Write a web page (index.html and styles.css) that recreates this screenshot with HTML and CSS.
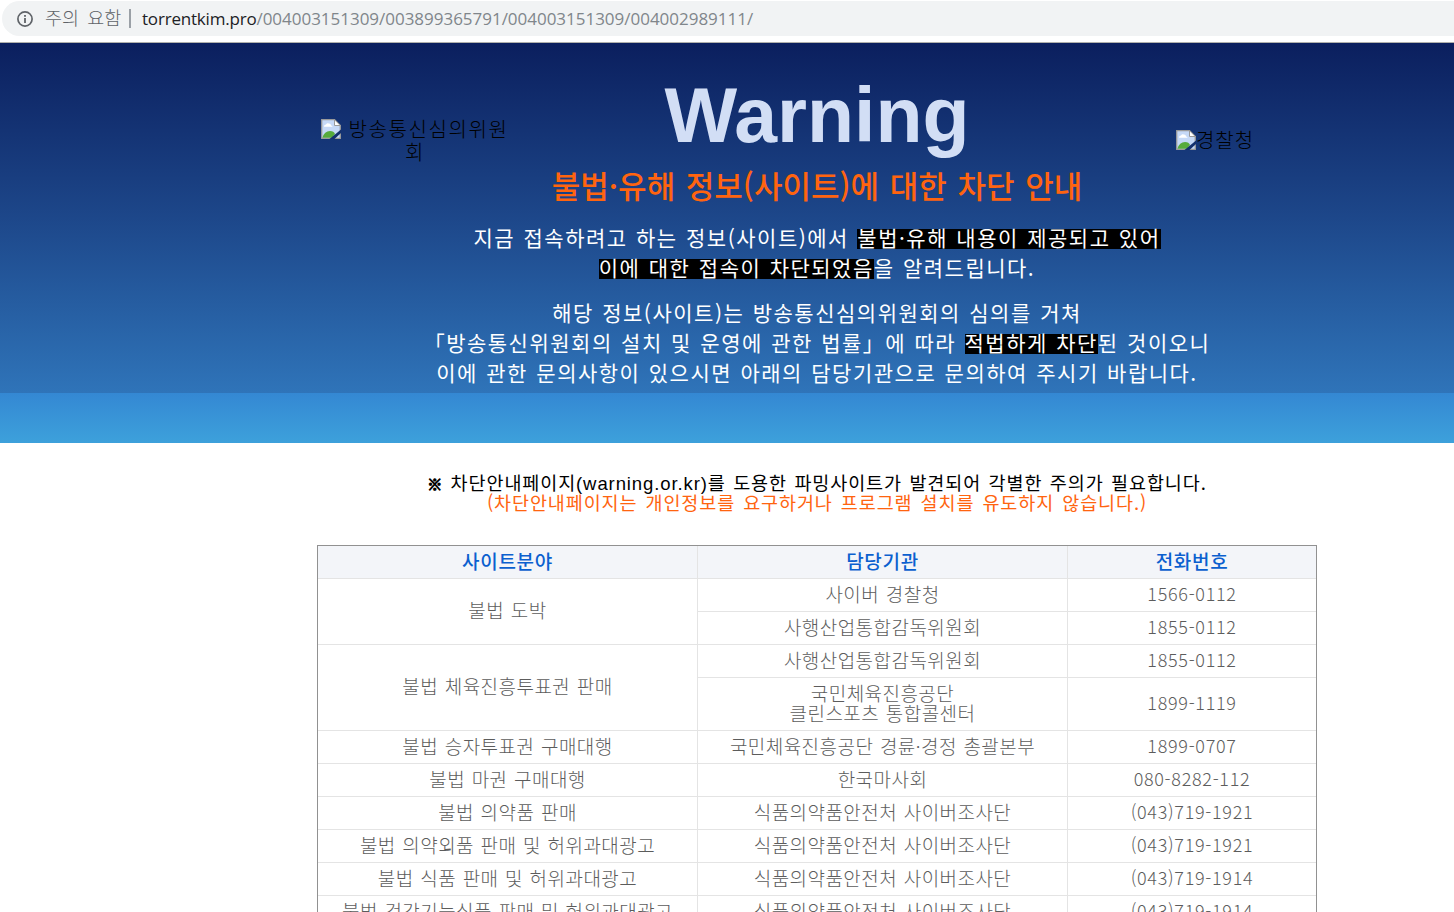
FILE: index.html
```html
<!DOCTYPE html>
<html lang="ko">
<head>
    <meta charset="UTF-8">
    <title>불법·유해 정보(사이트)에 대한 차단 안내</title>
    <link rel="stylesheet" href="styles.css">
</head>
<body>
    <div class="browser-bar">
        <div class="address">
            <svg class="info-icon" viewBox="0 0 16 16" width="16" height="16">
                <circle cx="8" cy="8" r="7.1" fill="none" stroke="#5f6368" stroke-width="1.7"/>
                <rect x="7.1" y="7" width="1.8" height="5" fill="#5f6368"/>
                <rect x="7.1" y="4" width="1.8" height="1.8" fill="#5f6368"/>
            </svg>
            <span class="notice">주의 요함</span>
            <span class="divider"></span>
            <span class="url"><b class="host">torrentkim.pro</b>/004003151309/003899365791/004003151309/004002989111/</span>
        </div>
    </div>

    <header class="top">
        <div class="top-inner">
            <div class="logo logo-left">
                <svg class="broken" viewBox="0 0 20 20" width="20" height="20">
                    <path d="M.7 .7H13.5L19.3 6.5V19.3H.7Z" fill="#c6d9f7" stroke="#9a9a9a" stroke-width="1.3"/>
                    <path d="M3 7.5q0-2 2-2q1-2 3-1q2 0 2 2q1.500 0 1.500 1.200H3Z" fill="#fff"/>
                    <path d="M1.400 18.700q2-6.700 7.600-6.700q4 0 5 3l-3 3.700Z" fill="#57ab3c"/>
                    <path d="M13.500 .7V6.500H19.300Z" fill="#fff" stroke="#9a9a9a"/>
                    <path d="M8.500 20L20 10.500V14L13.500 20Z" fill="#14306d"/>
                </svg>
                방송통신심의위원회
            </div>
            <div class="message">
                <h1>Warning</h1>
                <h2>불법·유해 정보(사이트)에 대한 차단 안내</h2>
                <p>지금 접속하려고 하는 정보(사이트)에서 <mark>불법·유해 내용이 제공되고 있어</mark><br>
                <mark>이에 대한 접속이 차단되었음</mark>을 알려드립니다.</p>
                <p>해당 정보(사이트)는 방송통신심의위원회의 심의를 거쳐<br>
                「방송통신위원회의 설치 및 운영에 관한 법률」에 따라 <mark>적법하게 차단</mark>된 것이오니<br>
                이에 관한 문의사항이 있으시면 아래의 담당기관으로 문의하여 주시기 바랍니다.</p>
            </div>
            <div class="logo logo-right">
                <svg class="broken" viewBox="0 0 20 20" width="20" height="20">
                    <path d="M.7 .7H13.5L19.3 6.5V19.3H.7Z" fill="#c6d9f7" stroke="#9a9a9a" stroke-width="1.3"/>
                    <path d="M3 7.5q0-2 2-2q1-2 3-1q2 0 2 2q1.500 0 1.500 1.200H3Z" fill="#fff"/>
                    <path d="M1.400 18.700q2-6.700 7.600-6.700q4 0 5 3l-3 3.700Z" fill="#57ab3c"/>
                    <path d="M13.500 .7V6.500H19.300Z" fill="#fff" stroke="#9a9a9a"/>
                    <path d="M8.500 20L20 10.500V14L13.500 20Z" fill="#14306d"/>
                </svg>경찰청
            </div>
        </div>
    </header>
    <div class="strip"></div>

    <main>
        <div class="caution">
            <p class="caution-main"><b class="ref-mark">※</b> 차단안내페이지<span class="latin">(warning.or.kr)</span>를 도용한 파밍사이트가 발견되어 각별한 주의가 필요합니다.</p>
            <p class="caution-sub">(차단안내페이지는 개인정보를 요구하거나 프로그램 설치를 유도하지 않습니다.)</p>
        </div>
        <table>
            <colgroup>
                <col class="col-site">
                <col class="col-org">
                <col class="col-tel">
            </colgroup>
            <tr><th>사이트분야</th><th>담당기관</th><th>전화번호</th></tr>
            <tr><td class="group" rowspan="2">불법 도박</td><td>사이버 경찰청</td><td class="tel">1566-0112</td></tr>
            <tr><td>사행산업통합감독위원회</td><td class="tel">1855-0112</td></tr>
            <tr><td class="group" rowspan="2">불법 체육진흥투표권 판매</td><td>사행산업통합감독위원회</td><td class="tel">1855-0112</td></tr>
            <tr><td>국민체육진흥공단<br>클린스포츠 통합콜센터</td><td class="tel">1899-1119</td></tr>
            <tr><td>불법 승자투표권 구매대행</td><td>국민체육진흥공단 경륜·경정 총괄본부</td><td class="tel">1899-0707</td></tr>
            <tr><td>불법 마권 구매대행</td><td>한국마사회</td><td class="tel">080-8282-112</td></tr>
            <tr><td>불법 의약품 판매</td><td>식품의약품안전처 사이버조사단</td><td class="tel">(043)719-1921</td></tr>
            <tr><td>불법 의약외품 판매 및 허위과대광고</td><td>식품의약품안전처 사이버조사단</td><td class="tel">(043)719-1921</td></tr>
            <tr><td>불법 식품 판매 및 허위과대광고</td><td>식품의약품안전처 사이버조사단</td><td class="tel">(043)719-1914</td></tr>
            <tr><td>불법 건강기능식품 판매 및 허위과대광고</td><td>식품의약품안전처 사이버조사단</td><td class="tel">(043)719-1914</td></tr>
        </table>
    </main>
</body>
</html>
```
FILE: styles.css
```css
* {
    box-sizing: border-box;
}

body {
    margin: 0;
    height: 912px;
    overflow: hidden;
    background-color: #fff;
    font-family: "Noto Sans CJK KR", sans-serif;
}

h1, h2, p {
    margin: 0;
}

/* 주소창 */
.browser-bar {
    height: 43px;
    padding: 1px 0 0 2px;
    border-bottom: 1px solid #b0b0ac;
    overflow: hidden;
}

.address {
    display: flex;
    align-items: center;
    height: 35px;
    padding-left: 15px;
    border-radius: 18px 0 0 18px;
    background-color: #f1f3f4;
    color: #80868b;
    white-space: nowrap;
}

.notice {
    margin-left: 12px;
    width: 77px;
    font-size: 18.500px;
    font-weight: 300;
    line-height: 33px;
    padding-bottom: 2px;
    color: #5f6368;
    word-spacing: 3px;
}

.divider {
    width: 2px;
    height: 19px;
    margin: 0 11px 0 7px;
    background-color: #9aa0a6;
}

.url {
    font-family: "Open Sans", sans-serif;
    font-size: 17px;
    line-height: 35px;
    letter-spacing: -0.02px;
}

.host {
    font-weight: normal;
    letter-spacing: -0.2px;
    color: #202124;
}

/* 상단 경고 영역 */
.top {
    height: 350px;
    padding-left: 317px;
    background: linear-gradient(#0b1f5e, #1d478a 50%, #2f74b9);
}

.top-inner {
    display: flex;
    justify-content: space-between;
    width: 1000px;
}

.logo {
    width: 200px;
    flex: none;
    font-size: 20px;
    font-weight: 300;
    line-height: 22px;
    text-align: center;
    color: #000;
}

.logo-left {
    padding: 74px 4px 0 0;
    line-height: 23px;
    word-break: break-all;
    letter-spacing: 1.6px;
}

.logo-right {
    padding: 86px 4px 0 0;
    letter-spacing: 1px;
}

.broken {
    vertical-align: -2px;
}

.message {
    flex: none;
    width: 840px;
    margin: 0 -120px;
    text-align: center;
    color: #fff;
    font-size: 21px;
    line-height: 30px;
    letter-spacing: 1.5px;
    word-spacing: 1px;
    white-space: nowrap;
}

.message h1 {
    padding-top: 30px;
    font-family: "Liberation Sans", sans-serif;
    font-size: 77px;
    line-height: 84px;
    letter-spacing: 0;
    color: #d2def5;
}

.message h2 {
    font-size: 31px;
    font-weight: 500;
    line-height: 40px;
    letter-spacing: 0;
    word-spacing: 2px;
    color: #ff640f;
    padding-top: 8px;
    height: 65px;
}

.message p {
    margin-bottom: 15px;
}

/* 글자보다 살짝 아래로 내려온 검은 배경 */
mark {
    display: inline-block;
    height: 20px;
    line-height: 16px;
    background-color: #000;
    color: #fff;
}

.strip {
    height: 50px;
    background: linear-gradient(#3488d3, #3da1db);
}

main {
    width: 1000px;
    margin-left: 317px;
}

.caution {
    padding-top: 29px;
    height: 102px;
    text-align: center;
    font-size: 18.500px;
    line-height: 20px;
    letter-spacing: 0.9px;
    word-spacing: 2px;
    white-space: nowrap;
    color: #000;
}

.caution-main {
    height: 20px;
    word-spacing: 1.4px;
}

.caution-sub {
    color: #ff640f;
}

.ref-mark {
    font-size: 15px;
    line-height: 1;
    -webkit-text-stroke: 1px #000;
}

.latin {
    font-family: "Liberation Sans", sans-serif;
}

/* 담당기관 표 */
table {
    width: 1000px;
    table-layout: fixed;
    border-collapse: separate;
    border-spacing: 0;
    border: 1px solid #919191;
    text-align: center;
    font-size: 19px;
    font-weight: 300;
    line-height: 20px;
    letter-spacing: 0.45px;
    word-spacing: 0.8px;
    color: #5c5c5c;
}

.col-site {
    width: 380px;
}

.col-org {
    width: 370px;
}

th, td {
    height: 33px;
    padding: 5px 0 7px;
    border-right: 1px solid #e4e4e4;
    border-bottom: 1px solid #e4e4e4;
}

th:last-child, .tel {
    border-right: 0;
}

th {
    background-color: #f3f5f9;
    font-weight: 500;
    letter-spacing: 0.7px;
    color: #0b60cf;
}

.group {
    padding-bottom: 9px;
}

.tel {
    padding: 4px 0 8px;
    font-size: 18px;
    letter-spacing: 0.7px;
}
```
